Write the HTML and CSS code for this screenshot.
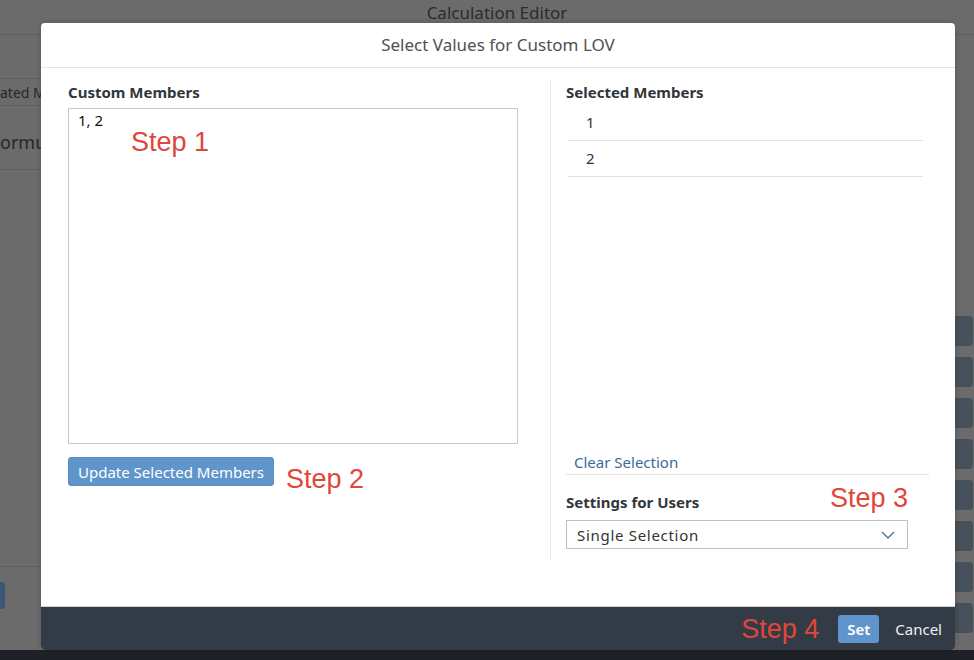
FILE: index.html
```html
<!DOCTYPE html>
<html lang="en">
<head>
<meta charset="utf-8">
<title>Select Values for Custom LOV</title>
<link rel="stylesheet" href="styles.css">
</head>
<body>
<div class="app">
  <header class="app-title">Calculation Editor</header>
  <div class="app-body">
    <div class="bg-left">
      <div class="bg-tabs">ated M</div>
      <div class="bg-formula">ormu</div>
      <div class="bg-foot"><span class="bg-btn"></span></div>
    </div>
    <div class="bg-right">
      <span class="bg-pill"></span><span class="bg-pill"></span><span class="bg-pill"></span><span class="bg-pill"></span>
      <span class="bg-pill"></span><span class="bg-pill"></span><span class="bg-pill"></span><span class="bg-pill"></span>
    </div>
  </div>
</div>
<div class="taskbar"></div>

<div class="dialog">
  <header class="dlg-header">Select Values for Custom LOV</header>
  <div class="dlg-body">
    <section class="col-left">
      <div class="label">Custom Members</div>
      <div class="ta-wrap">
        <div class="textarea">1, 2</div>
        <span class="step step1">Step 1</span>
      </div>
      <div class="btn-row">
        <button class="btn-primary">Update Selected Members</button>
        <span class="step step2">Step 2</span>
      </div>
    </section>
    <section class="col-right">
      <div class="label">Selected Members</div>
      <ul class="members">
        <li>1</li>
        <li>2</li>
      </ul>
      <div class="bottom">
        <div class="clear"><a class="link">Clear Selection</a></div>
        <div class="settings-row">
          <div class="label settings-label">Settings for Users</div>
          <span class="step">Step 3</span>
        </div>
        <div class="select">
          <span>Single Selection</span>
          <svg class="chev" width="14" height="8" viewBox="0 0 14 8"><path d="M1 1 L7 7 L13 1" fill="none" stroke="#4d6b8a" stroke-width="1.3"/></svg>
        </div>
      </div>
    </section>
  </div>
  <footer class="dlg-footer">
    <span class="step">Step 4</span>
    <button class="btn-set">Set</button>
    <button class="btn-cancel">Cancel</button>
  </footer>
</div>
</body>
</html>
```

FILE: styles.css
```css
* { box-sizing: border-box; }
html, body { margin: 0; padding: 0; }
body {
  width: 974px;
  height: 660px;
  overflow: hidden;
  font-family: "Noto Sans", "Open Sans", sans-serif;
  background: #6b6b6b;
  position: relative;
}

/* dimmed background application */
.app {
  height: 650px;
  background: #6b6b6b;
  display: flex;
  flex-direction: column;
}
.app-title {
  height: 35px;
  border-bottom: 1px solid #5e5e5e;
  padding-left: 20px;
  text-align: center;
  font-size: 17px;
  line-height: 26px;
  color: #2b2b2b;
}
.app-body {
  flex: 1;
  display: flex;
  justify-content: space-between;
}
.bg-left {
  width: 41px;
  display: flex;
  flex-direction: column;
  overflow: hidden;
  white-space: nowrap;
}
.bg-tabs {
  margin-top: 43px;
  height: 28px;
  border-top: 1px solid #5e5e5e;
  border-bottom: 1px solid #5e5e5e;
  font-size: 14px;
  line-height: 28px;
  color: #262626;
  overflow: hidden;
}
.bg-formula {
  height: 64px;
  border-bottom: 1px solid #5e5e5e;
  font-size: 18px;
  line-height: 24px;
  padding-top: 24px;
  color: #262626;
  overflow: hidden;
}
.bg-foot {
  margin-top: auto;
  border-top: 1px solid #5e5e5e;
  padding-top: 15px;
  height: 84px;
}
.bg-btn {
  display: block;
  width: 5px;
  height: 27px;
  background: #3b5676;
  border-radius: 0 3px 3px 0;
}
.bg-right {
  width: 30px;
  display: flex;
  flex-direction: column;
  align-items: flex-end;
  gap: 11px;
  padding-top: 281px;
  padding-right: 1px;
  overflow: hidden;
}
.bg-pill {
  display: block;
  width: 24px;
  height: 30px;
  flex: none;
  background: #46515b;
  border-radius: 4px;
}
.taskbar {
  height: 10px;
  background: #1e2226;
}

/* dialog (overlay) */
.dialog {
  position: absolute;
  left: 41px;
  top: 23px;
  width: 914px;
  height: 627px;
  background: #fff;
  border-radius: 4px;
  box-shadow: 0 0 6px rgba(0,0,0,0.18);
  display: flex;
  flex-direction: column;
  overflow: hidden;
}
.dlg-header {
  height: 45px;
  border-bottom: 1px solid #e5e5e5;
  text-align: center;
  font-size: 17px;
  line-height: 44px;
  color: #505050;
}
.dlg-body {
  flex: 1;
  display: flex;
  padding: 11px 0 46px 0;
}
.label {
  font-size: 15px;
  font-weight: 700;
  line-height: 18px;
  color: #32363a;
  margin-top: 4px;
}
.col-left {
  width: 509px;
  padding: 0 32px 0 27px;
}
.col-left .label { margin-bottom: 7px; }
.ta-wrap { position: relative; }
.textarea {
  height: 336px;
  border: 1px solid #c8c8c8;
  padding: 2px 9px;
  font-size: 15px;
  line-height: 18px;
  color: #111;
}
.step {
  font-family: "Liberation Sans", Arial, sans-serif;
  font-size: 27px;
  line-height: 30px;
  color: #e0463b;
  white-space: nowrap;
}
.step1 {
  position: absolute;
  left: 63px;
  top: 19px;
}
.btn-row {
  display: flex;
  align-items: flex-start;
  gap: 12px;
  margin-top: 13px;
}
.btn-primary {
  height: 29px;
  padding: 0 9px;
  border: 1px solid #5a8fc3;
  border-radius: 3px;
  background: #5f95ca;
  color: #fff;
  font-family: inherit;
  font-size: 15px;
}
.step2 { margin-top: 7px; }

.col-right {
  flex: 1;
  border-left: 1px solid #ececec;
  padding: 0 26px 11px 15px;
  display: flex;
  flex-direction: column;
}
.members {
  list-style: none;
  margin: 4px 6px 0 2px;
  padding: 0;
}
.members li {
  height: 36px;
  border-bottom: 1px solid #e2e2e2;
  padding-left: 18px;
  font-size: 15px;
  line-height: 35px;
  color: #333;
}
.bottom {
  margin-top: auto;
  display: flex;
  flex-direction: column;
}
.clear {
  height: 25px;
  border-bottom: 1px solid #e2e2e2;
  padding-left: 8px;
  line-height: 24px;
}
.link {
  font-size: 15px;
  color: #3d6a95;
}
.settings-row {
  width: 342px;
  display: flex;
  justify-content: space-between;
  align-items: flex-start;
  margin-top: 8px;
}
.settings-label { margin-top: 10px; }
.select {
  width: 342px;
  height: 29px;
  margin-top: 7px;
  border: 1px solid #bfbfbf;
  padding: 0 12px 0 10px;
  display: flex;
  align-items: center;
  justify-content: space-between;
  font-size: 15px;
  letter-spacing: 0.7px;
  color: #333;
}
.chev { display: block; }

.dlg-footer {
  height: 44px;
  background: #333c46;
  border-top: 1px solid #cfd4d9;
  display: flex;
  align-items: center;
  justify-content: flex-end;
  padding-right: 13px;
}
.dlg-footer .step { margin-right: 19px; }
.btn-set {
  width: 41px;
  height: 28px;
  border: none;
  border-radius: 3px;
  background: #5f95ca;
  color: #fff;
  font-family: inherit;
  font-size: 15px;
  font-weight: 600;
  padding: 0;
}
.btn-cancel {
  margin-left: 16px;
  border: none;
  background: transparent;
  color: #eef1f4;
  font-family: inherit;
  font-size: 15px;
  padding: 0;
}
```
